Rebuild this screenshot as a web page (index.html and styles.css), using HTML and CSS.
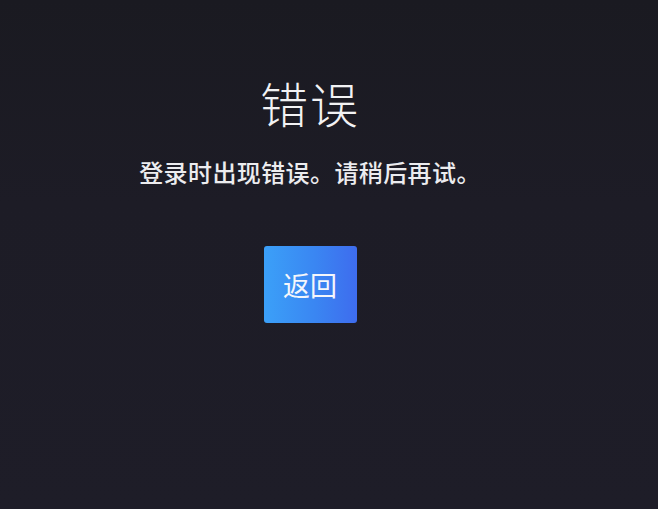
FILE: index.html
```html
<!DOCTYPE html>
<html lang="zh-CN">
<head>
<meta charset="utf-8">
<link rel="stylesheet" href="styles.css">
</head>
<body>
<main class="page">
  <h1 class="title">错误</h1>
  <p class="message">登录时出现错误。请稍后再试。</p>
  <button class="back">返回</button>
</main>
</body>
</html>
```
FILE: styles.css
```css
html, body {
  margin: 0;
  padding: 0;
  height: 100%;
}
body {
  background: linear-gradient(180deg, #1a1a21 0%, #1d1c26 40%, #1e1d28 100%);
  font-family: "Noto Sans CJK SC", "Noto Sans", sans-serif;
  color: #f2f2f4;
}
.page {
  display: flex;
  flex-direction: column;
  align-items: center;
  padding: 70px 38px 0 0;
}
.title {
  margin: 0;
  font-size: 48px;
  font-weight: 300;
  line-height: 64px;
  letter-spacing: 2px;
}
.message {
  margin: 21px 0 0 0;
  font-size: 24px;
  font-weight: 500;
  line-height: 34px;
  letter-spacing: 0.4px;
  color: #ececef;
}
.back {
  margin-top: 57px;
  width: 93px;
  height: 77px;
  border: none;
  border-radius: 3px;
  background: linear-gradient(90deg, #3ba0f8 0%, #3a86f2 55%, #3e6cee 100%);
  color: #f4f6fb;
  font-family: "Noto Sans CJK SC", "Noto Sans", sans-serif;
  font-size: 27px;
  font-weight: 400;
  padding: 0;
}
```
